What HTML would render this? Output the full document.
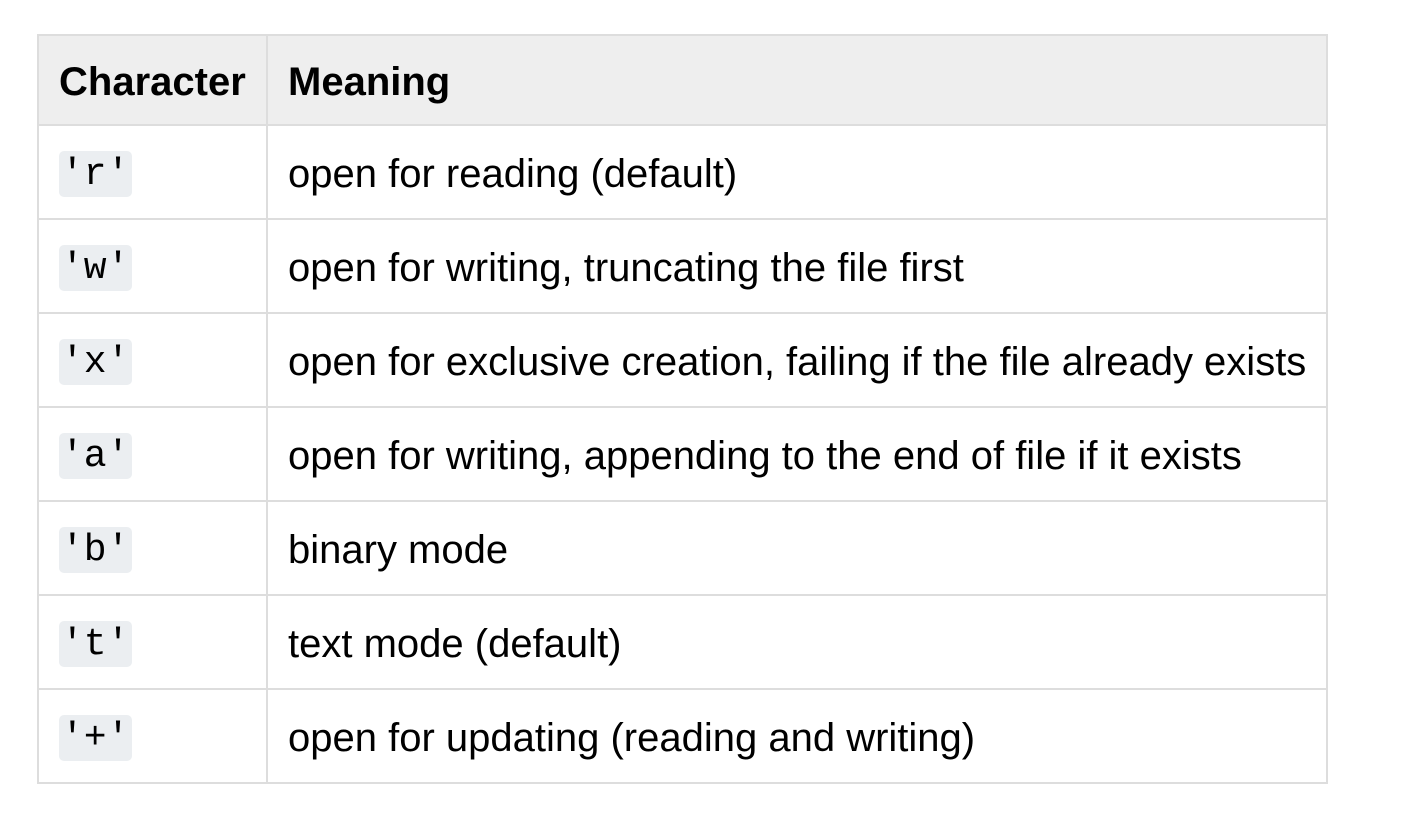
<!DOCTYPE html>
<html><head><style>
body{margin:0;background:#fff;}
table{position:absolute;left:37px;top:34px;border-collapse:collapse;font-family:"Liberation Sans",sans-serif;font-size:40px;color:#000;}
td,th{border:2px solid #ddd;padding:4px 0 0 20px;text-align:left;vertical-align:middle;}
th{background:#eee;font-weight:bold;font-size:40px;height:84px;}
td{height:88px;}
tr td:first-child, tr th:first-child{width:207px;}
tr td:last-child, tr th:last-child{width:1038px;}
code{font-family:"Liberation Mono",monospace;font-size:38px;background:#ebeef1;border-radius:5px;padding:2px 3px 1px 2px;position:relative;top:-2px;}
</style></head><body>
<table>
<tr><th>Character</th><th>Meaning</th></tr>
<tr><td><code>'r'</code></td><td>open for reading (default)</td></tr>
<tr><td><code>'w'</code></td><td>open for writing, truncating the file first</td></tr>
<tr><td><code>'x'</code></td><td>open for exclusive creation, failing if the file already exists</td></tr>
<tr><td><code>'a'</code></td><td>open for writing, appending to the end of file if it exists</td></tr>
<tr><td><code>'b'</code></td><td>binary mode</td></tr>
<tr><td><code>'t'</code></td><td>text mode (default)</td></tr>
<tr><td><code>'+'</code></td><td>open for updating (reading and writing)</td></tr>
</table>
</body></html>
